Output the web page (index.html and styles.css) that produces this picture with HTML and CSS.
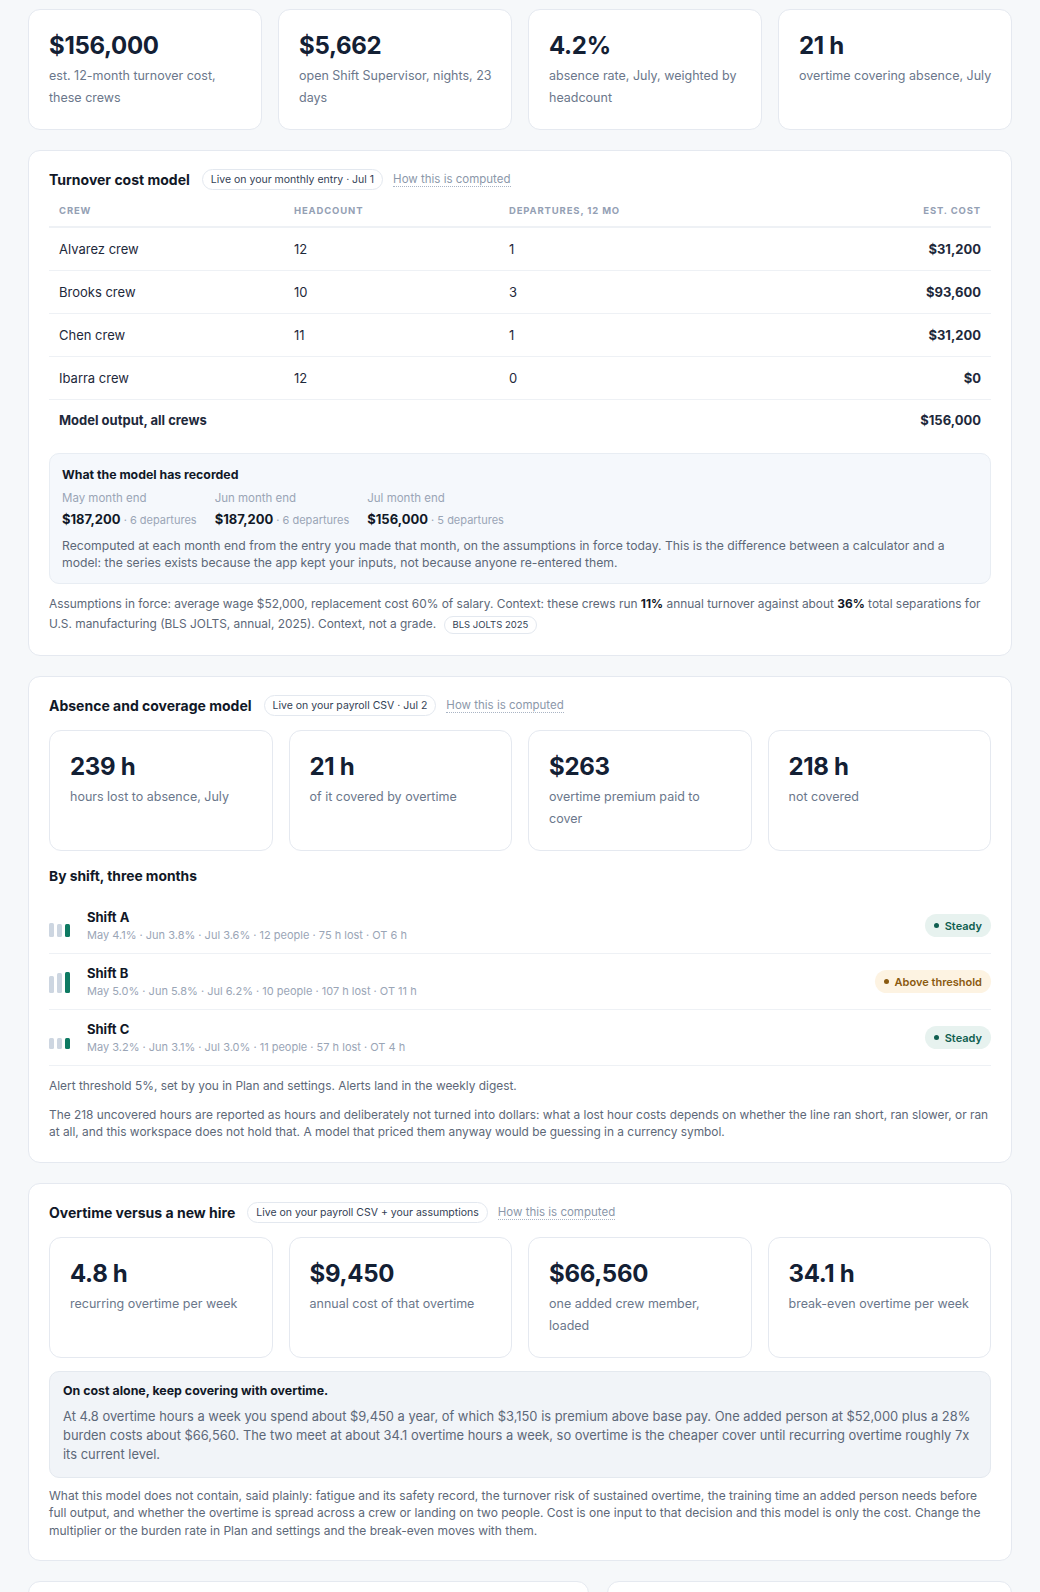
FILE: index.html
```html
<!DOCTYPE html>
<html lang="en">
<head>
  <meta charset="UTF-8">
  <title>Crew cost models</title>
  <link rel="stylesheet" href="styles.css">
</head>
<body>
  <div class="page">

    <div class="stat-grid">
      <div class="stat">
        <div class="stat-value">$156,000</div>
        <div class="stat-label">est. 12-month turnover cost, these crews</div>
      </div>
      <div class="stat">
        <div class="stat-value">$5,662</div>
        <div class="stat-label">open Shift Supervisor, nights, 23 days</div>
      </div>
      <div class="stat">
        <div class="stat-value">4.2%</div>
        <div class="stat-label">absence rate, July, weighted by headcount</div>
      </div>
      <div class="stat">
        <div class="stat-value">21 h</div>
        <div class="stat-label">overtime covering absence, July</div>
      </div>
    </div>

    <!-- Turnover -->
    <section class="panel">
      <div class="panel-head">
        <h2>Turnover cost model</h2>
        <span class="pill">Live on your monthly entry · Jul 1</span>
        <a class="how" href="#">How this is computed</a>
      </div>

      <table class="crew-table">
        <tr>
          <th class="col-crew">Crew</th>
          <th class="col-head">Headcount</th>
          <th>Departures, 12 mo</th>
          <th class="num">Est. cost</th>
        </tr>
        <tr>
          <td>Alvarez crew</td>
          <td>12</td>
          <td>1</td>
          <td class="num strong">$31,200</td>
        </tr>
        <tr>
          <td>Brooks crew</td>
          <td>10</td>
          <td>3</td>
          <td class="num strong">$93,600</td>
        </tr>
        <tr>
          <td>Chen crew</td>
          <td>11</td>
          <td>1</td>
          <td class="num strong">$31,200</td>
        </tr>
        <tr>
          <td>Ibarra crew</td>
          <td>12</td>
          <td>0</td>
          <td class="num strong">$0</td>
        </tr>
        <tr class="total">
          <td class="strong">Model output, all crews</td>
          <td></td>
          <td></td>
          <td class="num strong">$156,000</td>
        </tr>
      </table>

      <div class="record">
        <h3>What the model has recorded</h3>
        <div class="record-cols">
          <div class="record-col">
            <div class="record-month">May month end</div>
            <div class="record-value"><b>$187,200</b> · 6 departures</div>
          </div>
          <div class="record-col">
            <div class="record-month">Jun month end</div>
            <div class="record-value"><b>$187,200</b> · 6 departures</div>
          </div>
          <div class="record-col">
            <div class="record-month">Jul month end</div>
            <div class="record-value"><b>$156,000</b> · 5 departures</div>
          </div>
        </div>
        <p>Recomputed at each month end from the entry you made that month, on the assumptions in force today. This is the difference between a calculator and a model: the series exists because the app kept your inputs, not because anyone re-entered them.</p>
      </div>

      <p class="note note-tall">Assumptions in force: average wage $52,000, replacement cost 60% of salary. Context: these crews run <b>11%</b> annual turnover against about <b>36%</b> total separations for U.S. manufacturing (BLS JOLTS, annual, 2025). Context, not a grade. <span class="pill pill-small">BLS JOLTS 2025</span></p>
    </section>

    <!-- Absence -->
    <section class="panel">
      <div class="panel-head">
        <h2>Absence and coverage model</h2>
        <span class="pill">Live on your payroll CSV · Jul 2</span>
        <a class="how" href="#">How this is computed</a>
      </div>

      <div class="stat-grid inner">
        <div class="stat">
          <div class="stat-value">239 h</div>
          <div class="stat-label">hours lost to absence, July</div>
        </div>
        <div class="stat">
          <div class="stat-value">21 h</div>
          <div class="stat-label">of it covered by overtime</div>
        </div>
        <div class="stat">
          <div class="stat-value">$263</div>
          <div class="stat-label">overtime premium paid to cover</div>
        </div>
        <div class="stat">
          <div class="stat-value">218 h</div>
          <div class="stat-label">not covered</div>
        </div>
      </div>

      <h4 class="sub-head">By shift, three months</h4>

      <div class="shift-list">
        <div class="shift">
          <div class="bars">
            <span class="bar" style="height: 13.9px"></span>
            <span class="bar" style="height: 12.9px"></span>
            <span class="bar now" style="height: 12.2px"></span>
          </div>
          <div class="shift-text">
            <div class="shift-name">Shift A</div>
            <div class="shift-meta">May 4.1% · Jun 3.8% · Jul 3.6% · 12 people · 75 h lost · OT 6 h</div>
          </div>
          <span class="badge ok">Steady</span>
        </div>
        <div class="shift">
          <div class="bars">
            <span class="bar" style="height: 16.9px"></span>
            <span class="bar" style="height: 19.6px"></span>
            <span class="bar now" style="height: 21px"></span>
          </div>
          <div class="shift-text">
            <div class="shift-name">Shift B</div>
            <div class="shift-meta">May 5.0% · Jun 5.8% · Jul 6.2% · 10 people · 107 h lost · OT 11 h</div>
          </div>
          <span class="badge warn">Above threshold</span>
        </div>
        <div class="shift">
          <div class="bars">
            <span class="bar" style="height: 10.8px"></span>
            <span class="bar" style="height: 10.5px"></span>
            <span class="bar now" style="height: 10.2px"></span>
          </div>
          <div class="shift-text">
            <div class="shift-name">Shift C</div>
            <div class="shift-meta">May 3.2% · Jun 3.1% · Jul 3.0% · 11 people · 57 h lost · OT 4 h</div>
          </div>
          <span class="badge ok">Steady</span>
        </div>
      </div>

      <p class="note">Alert threshold 5%, set by you in Plan and settings. Alerts land in the weekly digest.</p>
      <p class="note">The 218 uncovered hours are reported as hours and deliberately not turned into dollars: what a lost hour costs depends on whether the line ran short, ran slower, or ran at all, and this workspace does not hold that. A model that priced them anyway would be guessing in a currency symbol.</p>
    </section>

    <!-- Overtime vs hire -->
    <section class="panel">
      <div class="panel-head">
        <h2>Overtime versus a new hire</h2>
        <span class="pill">Live on your payroll CSV + your assumptions</span>
        <a class="how" href="#">How this is computed</a>
      </div>

      <div class="stat-grid inner">
        <div class="stat">
          <div class="stat-value">4.8 h</div>
          <div class="stat-label">recurring overtime per week</div>
        </div>
        <div class="stat">
          <div class="stat-value">$9,450</div>
          <div class="stat-label">annual cost of that overtime</div>
        </div>
        <div class="stat">
          <div class="stat-value">$66,560</div>
          <div class="stat-label">one added crew member, loaded</div>
        </div>
        <div class="stat">
          <div class="stat-value">34.1 h</div>
          <div class="stat-label">break-even overtime per week</div>
        </div>
      </div>

      <div class="verdict">
        <h3>On cost alone, keep covering with overtime.</h3>
        <p>At 4.8 overtime hours a week you spend about $9,450 a year, of which $3,150 is premium above base pay. One added person at $52,000 plus a 28% burden costs about $66,560. The two meet at about 34.1 overtime hours a week, so overtime is the cheaper cover until recurring overtime roughly 7x its current level.</p>
      </div>

      <p class="note note-after">What this model does not contain, said plainly: fatigue and its safety record, the turnover risk of sustained overtime, the training time an added person needs before full output, and whether the overtime is spread across a crew or landing on two people. Cost is one input to that decision and this model is only the cost. Change the multiplier or the burden rate in Plan and settings and the break-even moves with them.</p>
    </section>

    <div class="bottom-row">
      <section class="panel panel-empty"></section>
      <section class="panel panel-empty"></section>
    </div>

  </div>
</body>
</html>
```

FILE: styles.css
```css
* {
  box-sizing: border-box;
}

body {
  margin: 0;
  background-color: #f6f8fa;
  font-family: Inter, "Noto Sans", Arial, sans-serif;
  color: #1e293b;
}

.page {
  padding: 9px 28px 40px;
  display: flex;
  flex-direction: column;
  gap: 20px;
}

/* stat cards */
.stat-grid {
  display: grid;
  grid-template-columns: repeat(4, 1fr);
  gap: 16px;
}

.stat {
  background-color: white;
  border: 1px solid #e5e9f0;
  border-radius: 12px;
  padding: 19px 18px 20px 20px;
}

.stat-value {
  font-size: 24px;
  line-height: 34px;
  font-weight: 700;
  color: #132034;
  letter-spacing: -0.3px;
}

.stat-label {
  margin-top: 2px;
  font-size: 12.5px;
  line-height: 22px;
  color: #6b778b;
}

.stat-grid.inner {
  margin-bottom: 15px;
}

/* panels */
.panel {
  background-color: white;
  border: 1px solid #e5e9f0;
  border-radius: 12px;
  padding: 18px 20px 21px;
}

.panel-head {
  display: flex;
  align-items: center;
  gap: 10px;
  height: 21px;
  margin-bottom: 14px;
}

.panel-head h2 {
  margin: 0;
  font-size: 14px;
  font-weight: 700;
  color: #111827;
  margin-right: 2px;
}

.pill {
  display: inline-block;
  border: 1px solid #e3e8ef;
  border-radius: 999px;
  padding: 0 8px;
  font-size: 10.5px;
  line-height: 19px;
  color: #334155;
  background-color: white;
}

.pill-small {
  font-size: 9.5px;
  line-height: 16px;
  margin-left: 4px;
  vertical-align: middle;
}

.how {
  font-size: 11.5px;
  color: #8c98aa;
  text-decoration: none;
  border-bottom: 1px dotted #a9b4c4;
  line-height: 14px;
}

/* turnover table */
.crew-table {
  width: 100%;
  border-collapse: collapse;
  margin-top: -14px;
}

.crew-table th {
  text-align: left;
  font-size: 9.5px;
  font-weight: 700;
  letter-spacing: 0.09em;
  text-transform: uppercase;
  color: #94a0b4;
  padding: 15px 10px 10px;
  border-bottom: 2px solid #eef1f5;
}

.crew-table .col-crew {
  width: 235px;
}

.crew-table .col-head {
  width: 215px;
}

.crew-table td {
  font-size: 13px;
  padding: 0 10px;
  height: 43px;
  border-bottom: 1px solid #eef1f5;
  color: #1e293b;
}

.crew-table .total td {
  border-bottom: none;
  height: 41px;
}

.crew-table .num {
  text-align: right;
}

.strong {
  font-weight: 700;
  color: #111827;
}

/* recorded box */
.record {
  margin-top: 13px;
  background-color: #f5f8fc;
  border: 1px solid #e8edf3;
  border-radius: 10px;
  padding: 12px 12px 12px;
}

.record h3 {
  margin: 0;
  font-size: 12.3px;
  line-height: 18px;
  font-weight: 700;
  color: #111827;
}

.record-cols {
  display: flex;
  gap: 18px;
  margin-top: 6px;
}

.record-month {
  font-size: 11.5px;
  line-height: 16px;
  color: #9aa5b6;
}

.record-value {
  margin-top: 4px;
  font-size: 11px;
  line-height: 18px;
  color: #9aa5b6;
}

.record-value b {
  font-size: 13px;
  color: #111827;
}

.record p {
  margin: 8px 0 0;
  font-size: 12.2px;
  line-height: 17px;
  color: #5d6878;
}

/* notes */
.note {
  margin: 11px 0 0;
  font-size: 11.9px;
  line-height: 17.5px;
  color: #5d6878;
}

.note b {
  color: #111827;
}

.note-tall {
  margin-top: 10px;
  line-height: 20px;
}

.note-after {
  margin-top: 9px;
  font-size: 12px;
}

/* shifts */
.sub-head {
  margin: 0 0 12px;
  font-size: 13.8px;
  line-height: 20px;
  font-weight: 700;
  color: #111827;
}

.shift {
  display: flex;
  align-items: center;
  gap: 17px;
  padding: 9.5px 0;
  border-bottom: 1px solid #eef1f5;
}

.bars {
  display: flex;
  align-items: flex-end;
  gap: 3px;
  height: 22px;
}

.bar {
  width: 5px;
  border-radius: 1.5px;
  background-color: #cdd6e1;
}

.bar.now {
  background-color: #0e7a62;
}

.shift-text {
  flex: 1;
}

.shift-name {
  font-size: 13px;
  line-height: 18px;
  font-weight: 700;
  color: #111827;
}

.shift-meta {
  font-size: 11px;
  line-height: 18px;
  color: #9aa5b6;
}

.badge {
  display: inline-flex;
  align-items: center;
  gap: 6px;
  border-radius: 999px;
  padding: 0 9px;
  height: 23px;
  font-size: 11px;
  font-weight: 600;
}

.badge::before {
  content: "";
  width: 5px;
  height: 5px;
  border-radius: 50%;
  background-color: currentColor;
}

.badge.ok {
  background-color: #e7f2ef;
  color: #0f5e50;
}

.badge.warn {
  background-color: #fdf3e2;
  color: #8a5a10;
}

/* verdict */
.verdict {
  margin-top: -2px;
  background-color: #f1f4f8;
  border: 1px solid #e4e9ef;
  border-radius: 10px;
  padding: 10px 13px 13px;
}

.verdict h3 {
  margin: 0;
  font-size: 12.4px;
  line-height: 18px;
  font-weight: 700;
  color: #111827;
}

.verdict p {
  margin: 7px 0 0;
  font-size: 12.9px;
  line-height: 19px;
  color: #5d6878;
}

/* bottom row */
.bottom-row {
  display: grid;
  grid-template-columns: 561px 1fr;
  gap: 18px;
}

.panel-empty {
  min-height: 200px;
}
```
